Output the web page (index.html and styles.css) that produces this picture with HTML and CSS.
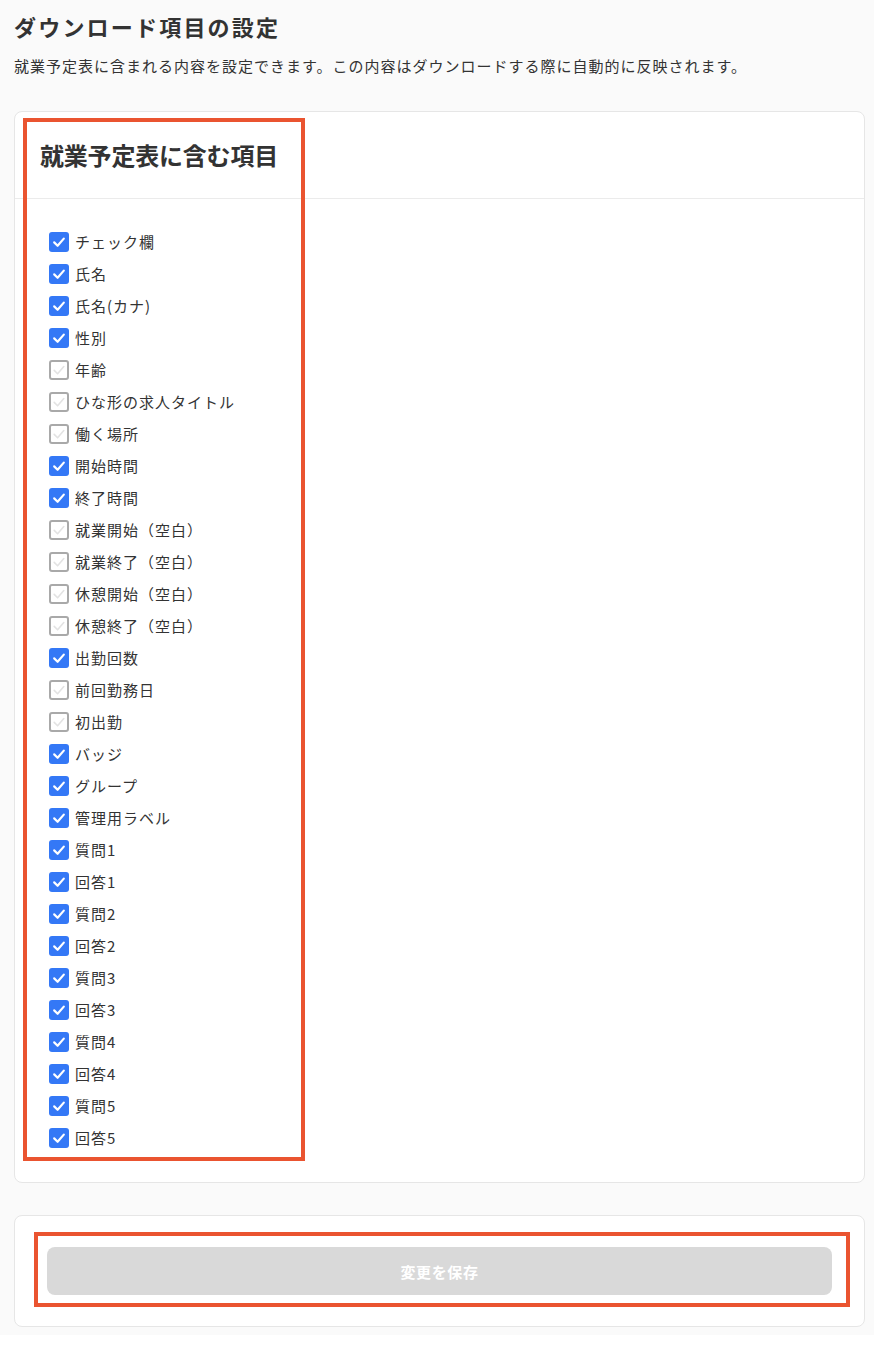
FILE: index.html
```html
<!DOCTYPE html>
<html lang="ja">
<head>
<meta charset="utf-8">
<title>ダウンロード項目の設定</title>
<link rel="stylesheet" href="styles.css">
</head>
<body>
<div class="page">
  <h1 class="page-title">ダウンロード項目の設定</h1>
  <p class="page-desc">就業予定表に含まれる内容を設定できます。この内容はダウンロードする際に自動的に反映されます。</p>

  <section class="card">
    <div class="card-header">
      <h2 class="card-title">就業予定表に含む項目</h2>
    </div>
    <ul class="items">
      <li class="item on"><span class="box"><svg viewBox="0 0 20 20"><path d="M5.2 10.4 L8.6 13.8 L14.8 6.6"/></svg></span><span class="label">チェック欄</span></li>
      <li class="item on"><span class="box"><svg viewBox="0 0 20 20"><path d="M5.2 10.4 L8.6 13.8 L14.8 6.6"/></svg></span><span class="label">氏名</span></li>
      <li class="item on"><span class="box"><svg viewBox="0 0 20 20"><path d="M5.2 10.4 L8.6 13.8 L14.8 6.6"/></svg></span><span class="label">氏名(カナ)</span></li>
      <li class="item on"><span class="box"><svg viewBox="0 0 20 20"><path d="M5.2 10.4 L8.6 13.8 L14.8 6.6"/></svg></span><span class="label">性別</span></li>
      <li class="item off"><span class="box"><svg viewBox="0 0 20 20"><path d="M5.2 10.4 L8.6 13.8 L14.8 6.6"/></svg></span><span class="label">年齢</span></li>
      <li class="item off"><span class="box"><svg viewBox="0 0 20 20"><path d="M5.2 10.4 L8.6 13.8 L14.8 6.6"/></svg></span><span class="label">ひな形の求人タイトル</span></li>
      <li class="item off"><span class="box"><svg viewBox="0 0 20 20"><path d="M5.2 10.4 L8.6 13.8 L14.8 6.6"/></svg></span><span class="label">働く場所</span></li>
      <li class="item on"><span class="box"><svg viewBox="0 0 20 20"><path d="M5.2 10.4 L8.6 13.8 L14.8 6.6"/></svg></span><span class="label">開始時間</span></li>
      <li class="item on"><span class="box"><svg viewBox="0 0 20 20"><path d="M5.2 10.4 L8.6 13.8 L14.8 6.6"/></svg></span><span class="label">終了時間</span></li>
      <li class="item off"><span class="box"><svg viewBox="0 0 20 20"><path d="M5.2 10.4 L8.6 13.8 L14.8 6.6"/></svg></span><span class="label">就業開始（空白）</span></li>
      <li class="item off"><span class="box"><svg viewBox="0 0 20 20"><path d="M5.2 10.4 L8.6 13.8 L14.8 6.6"/></svg></span><span class="label">就業終了（空白）</span></li>
      <li class="item off"><span class="box"><svg viewBox="0 0 20 20"><path d="M5.2 10.4 L8.6 13.8 L14.8 6.6"/></svg></span><span class="label">休憩開始（空白）</span></li>
      <li class="item off"><span class="box"><svg viewBox="0 0 20 20"><path d="M5.2 10.4 L8.6 13.8 L14.8 6.6"/></svg></span><span class="label">休憩終了（空白）</span></li>
      <li class="item on"><span class="box"><svg viewBox="0 0 20 20"><path d="M5.2 10.4 L8.6 13.8 L14.8 6.6"/></svg></span><span class="label">出勤回数</span></li>
      <li class="item off"><span class="box"><svg viewBox="0 0 20 20"><path d="M5.2 10.4 L8.6 13.8 L14.8 6.6"/></svg></span><span class="label">前回勤務日</span></li>
      <li class="item off"><span class="box"><svg viewBox="0 0 20 20"><path d="M5.2 10.4 L8.6 13.8 L14.8 6.6"/></svg></span><span class="label">初出勤</span></li>
      <li class="item on"><span class="box"><svg viewBox="0 0 20 20"><path d="M5.2 10.4 L8.6 13.8 L14.8 6.6"/></svg></span><span class="label">バッジ</span></li>
      <li class="item on"><span class="box"><svg viewBox="0 0 20 20"><path d="M5.2 10.4 L8.6 13.8 L14.8 6.6"/></svg></span><span class="label">グループ</span></li>
      <li class="item on"><span class="box"><svg viewBox="0 0 20 20"><path d="M5.2 10.4 L8.6 13.8 L14.8 6.6"/></svg></span><span class="label">管理用ラベル</span></li>
      <li class="item on"><span class="box"><svg viewBox="0 0 20 20"><path d="M5.2 10.4 L8.6 13.8 L14.8 6.6"/></svg></span><span class="label">質問1</span></li>
      <li class="item on"><span class="box"><svg viewBox="0 0 20 20"><path d="M5.2 10.4 L8.6 13.8 L14.8 6.6"/></svg></span><span class="label">回答1</span></li>
      <li class="item on"><span class="box"><svg viewBox="0 0 20 20"><path d="M5.2 10.4 L8.6 13.8 L14.8 6.6"/></svg></span><span class="label">質問2</span></li>
      <li class="item on"><span class="box"><svg viewBox="0 0 20 20"><path d="M5.2 10.4 L8.6 13.8 L14.8 6.6"/></svg></span><span class="label">回答2</span></li>
      <li class="item on"><span class="box"><svg viewBox="0 0 20 20"><path d="M5.2 10.4 L8.6 13.8 L14.8 6.6"/></svg></span><span class="label">質問3</span></li>
      <li class="item on"><span class="box"><svg viewBox="0 0 20 20"><path d="M5.2 10.4 L8.6 13.8 L14.8 6.6"/></svg></span><span class="label">回答3</span></li>
      <li class="item on"><span class="box"><svg viewBox="0 0 20 20"><path d="M5.2 10.4 L8.6 13.8 L14.8 6.6"/></svg></span><span class="label">質問4</span></li>
      <li class="item on"><span class="box"><svg viewBox="0 0 20 20"><path d="M5.2 10.4 L8.6 13.8 L14.8 6.6"/></svg></span><span class="label">回答4</span></li>
      <li class="item on"><span class="box"><svg viewBox="0 0 20 20"><path d="M5.2 10.4 L8.6 13.8 L14.8 6.6"/></svg></span><span class="label">質問5</span></li>
      <li class="item on"><span class="box"><svg viewBox="0 0 20 20"><path d="M5.2 10.4 L8.6 13.8 L14.8 6.6"/></svg></span><span class="label">回答5</span></li>
    </ul>
    <div class="highlight highlight-list"></div>
  </section>

  <section class="card card-actions">
    <button class="save-btn" type="button" disabled>変更を保存</button>
    <div class="highlight highlight-btn"></div>
  </section>
</div>
</body>
</html>
```

FILE: styles.css
```css
* {
  box-sizing: border-box;
}

html, body {
  margin: 0;
  padding: 0;
  background: #ffffff;
}

body {
  font-family: "Noto Sans CJK JP", "Noto Sans", "Liberation Sans", sans-serif;
  color: #333333;
}

.page {
  background: #fafafa;
  padding: 10px 9px 8px 14px;
}

.page-title {
  margin: 0;
  font-size: 22px;
  line-height: 32px;
  font-weight: 700;
  letter-spacing: 2.2px;
  color: #333333;
}

.page-desc {
  margin: 12px 0 0;
  font-size: 15px;
  line-height: 24px;
  letter-spacing: 1px;
  color: #333333;
}

.card {
  position: relative;
  background: #ffffff;
  border: 1px solid #e6e6e6;
  border-radius: 8px;
  margin-top: 33px;
}

.card-header {
  height: 87px;
  border-bottom: 1px solid #ebebeb;
  display: flex;
  align-items: center;
  padding: 0 25px;
}

.card-title {
  margin: 0;
  font-size: 24px;
  line-height: 32px;
  font-weight: 700;
  letter-spacing: -0.2px;
  color: #333333;
}

.items {
  list-style: none;
  margin: 0;
  padding: 27px 34px 28px;
}

.item {
  display: flex;
  align-items: center;
  height: 32px;
  gap: 6px;
}

.box {
  width: 20px;
  height: 20px;
  border-radius: 3px;
  flex: none;
  display: flex;
}

.box svg {
  width: 20px;
  height: 20px;
  fill: none;
  stroke-width: 2.2;
  stroke-linecap: round;
  stroke-linejoin: round;
}

.item.on .box {
  background: #3478f6;
}

.item.on .box svg {
  stroke: #ffffff;
}

.item.off .box {
  background: #ffffff;
  border: 2px solid #a9a9a9;
}

.item.off .box svg {
  margin: -2px;
  stroke: #e3e3e3;
  stroke-width: 1.6;
}

.label {
  font-size: 15px;
  line-height: 20px;
  letter-spacing: 1px;
  color: #333333;
}

.card.card-actions {
  margin-top: 32px;
  padding: 31px 32px 31px;
}

.save-btn {
  display: block;
  width: 100%;
  height: 48px;
  border: none;
  border-radius: 8px;
  background: #d9d9d9;
  color: #ffffff;
  font-family: "Noto Sans CJK JP", "Noto Sans", "Liberation Sans", sans-serif;
  font-size: 15px;
  font-weight: 700;
  letter-spacing: 0.6px;
}

.highlight {
  position: absolute;
  border: 4px solid #ea5430;
  pointer-events: none;
}

.highlight-list {
  left: 8px;
  top: 6px;
  width: 282px;
  height: 1043px;
}

.highlight-btn {
  left: 19px;
  top: 16px;
  width: 816px;
  height: 75px;
}
```
